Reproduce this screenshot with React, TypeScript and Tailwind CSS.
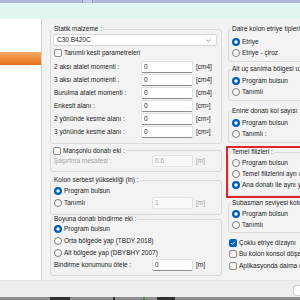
import React from "react";

const Radio = ({ checked }: { checked?: boolean }) => (
  <svg width="8" height="8" viewBox="0 0 8 8" className="shrink-0">
    {checked ? (
      <>
        <circle cx="4" cy="4" r="4" fill="#005fb8" />
        <circle cx="4" cy="4" r="1.7" fill="#ffffff" />
      </>
    ) : (
      <circle cx="4" cy="4" r="3.5" fill="#f9f9f9" stroke="#6f6f6f" strokeWidth="0.9" />
    )}
  </svg>
);

const Check = ({ checked }: { checked?: boolean }) =>
  checked ? (
    <span className="w-[8px] h-[8px] rounded-[2px] bg-[#005fb8] flex items-center justify-center shrink-0">
      <svg width="6" height="6" viewBox="0 0 6 6">
        <path d="M1 3.1 L2.4 4.4 L5 1.6" stroke="#ffffff" strokeWidth="0.9" fill="none" />
      </svg>
    </span>
  ) : (
    <span className="w-[8px] h-[8px] rounded-[2px] border border-[#8a8a8a] bg-[#f6f6f6] shrink-0" />
  );

const Input = ({ value, disabled, wide }: { value: string; disabled?: boolean; wide?: boolean }) => (
  <div
    className={
      (wide ? "w-[52px] " : "w-[41px] ") +
      (disabled
        ? "h-[12px] border border-[#e3e3e3] bg-[#f9f9f9] text-[#a3a3a3] rounded-[2px] flex items-center pl-[2px] shrink-0"
        : "h-[12px] border border-[#e0e0e0] border-b-[#8d8d8d] bg-white rounded-[2px] flex items-center pl-[2px] shrink-0")
    }
  >
    {value}
  </div>
);

const Group = ({
  legend,
  className,
  children,
}: {
  legend: React.ReactNode;
  className: string;
  children?: React.ReactNode;
}) => (
  <fieldset className={"border border-[#dadada] rounded-[3px] px-[3px] min-w-0 " + className}>
    <legend className="px-[1px] -ml-[1px] leading-[8px] h-[8px] whitespace-nowrap">{legend}</legend>
    {children}
  </fieldset>
);

const RadioRow = ({ label, checked, h }: { label: string; checked?: boolean; h: string }) => (
  <div className={"flex items-center gap-[2px] whitespace-nowrap " + h}>
    <Radio checked={checked} />
    <span>{label}</span>
  </div>
);

const MomentRow = ({ label, unit }: { label: string; unit: string }) => (
  <div className="h-[13px] flex items-center whitespace-nowrap">
    <span className="w-[87px] shrink-0">{label}</span>
    <Input value="0" wide />
    <span className="ml-[3px]">{unit}</span>
  </div>
);

export default function App() {
  return (
    <div className="w-[300px] h-[300px] overflow-hidden flex flex-col bg-[#f3f3f3] text-[#1b1b1b] font-['Liberation_Sans',Arial,sans-serif] text-[6.5px] leading-[8px]">
      {/* top strip */}
      <div className="h-[3px] bg-[#b1bade] flex shrink-0">
        <div className="ml-[82px] w-[11px] bg-[#c3c9e6] border-x border-[#8d96c4]" />
      </div>
      {/* mint band */}
      <div className="h-[16px] bg-[#e2f6f1] shrink-0" />

      {/* main area */}
      <div className="flex h-[261px] shrink-0">
        <div className="w-[42px] bg-white border-r border-[#d2d2d2] shrink-0 pt-[33px]">
          <div className="h-[13px] w-[41px] bg-gradient-to-b from-[#f6ab6a] via-[#f08b35] to-[#e6701c]" />
        </div>

        <div className="flex flex-1 pl-[8px] pt-[6px] bg-[#f3f3f3] overflow-hidden">
          {/* middle column */}
          <div className="w-[172px] flex flex-col shrink-0">
            <Group legend="Statik malzeme :" className="h-[119px]">
              <div className="mt-[1px] -ml-[1px] w-[164px] h-[12px] bg-white border border-[#d8d8d8] rounded-[2px] flex items-center justify-between pl-[3px] pr-[5px]">
                <span>C30 B420C</span>
                <svg width="5" height="3" viewBox="0 0 5 3">
                  <path d="M0.5 0.5 L2.5 2.5 L4.5 0.5" stroke="#666" strokeWidth="0.7" fill="none" />
                </svg>
              </div>
              <div className="h-[14px] flex items-center gap-[2px] whitespace-nowrap">
                <Check />
                <span>Tanımlı kesit parametreleri</span>
              </div>
              <MomentRow label="2 aksı atalet momenti :" unit="[cm4]" />
              <MomentRow label="3 aksı atalet momenti :" unit="[cm4]" />
              <MomentRow label="Burulma atalet momenti :" unit="[cm4]" />
              <MomentRow label="Enkesit alanı :" unit="[cm²]" />
              <MomentRow label="2 yönünde kesme alanı :" unit="[cm²]" />
              <MomentRow label="3 yönünde kesme alanı :" unit="[cm²]" />
            </Group>

            <fieldset className="mt-[2px] h-[26px] border border-[#dadada] rounded-[3px] px-[3px] min-w-0">
              <legend className="px-[1px] -ml-[2px] h-[9px] flex items-center gap-[2px] whitespace-nowrap">
                <Check />
                <span>Manşonlu donatı eki :</span>
              </legend>
              <div className="h-[12px] flex items-center whitespace-nowrap">
                <span className="w-[98px] shrink-0 text-[#a3a3a3]">Şaşırtma mesafesi :</span>
                <Input value="0.6" disabled />
                <span className="ml-[3px] text-[#a3a3a3]">[m]</span>
              </div>
            </fieldset>

            <Group legend="Kolon serbest yüksekliği (ln) :" className="mt-[4px] h-[39px]">
              <div className="mt-[1px]">
                <RadioRow label="Program bulsun" checked h="h-[12px]" />
                <div className="h-[12px] flex items-center whitespace-nowrap">
                  <div className="w-[98px] flex items-center gap-[2px] shrink-0">
                    <Radio />
                    <span>Tanımlı</span>
                  </div>
                  <Input value="1" disabled />
                  <span className="ml-[3px] text-[#a3a3a3]">[m]</span>
                </div>
              </div>
            </Group>

            <Group legend="Boyuna donatı bindirme eki :" className="h-[61px]">
              <RadioRow label="Program bulsun" checked h="h-[12px]" />
              <RadioRow label="Orta bölgede yap (TBDY 2018)" h="h-[12px]" />
              <RadioRow label="Alt bölgede yap (DBYBHY 2007)" h="h-[12px]" />
              <div className="h-[12px] flex items-center whitespace-nowrap">
                <span className="w-[98px] shrink-0">Bindirme konumunu ötele :</span>
                <Input value="0" />
                <span className="ml-[3px]">[m]</span>
              </div>
            </Group>
          </div>

          {/* right column */}
          <div className="w-[110px] ml-[6px] flex flex-col shrink-0">
            <Group legend="Daire kolon etriye tipleri" className="h-[37px]">
              <div className="mt-[3px]">
                <RadioRow label="Etriye" checked h="h-[11px]" />
                <RadioRow label="Etriye - çiroz" h="h-[11px]" />
              </div>
            </Group>

            <Group legend="Alt uç sarılma bölgesi uzunluğu :" className="mt-[3px] h-[36px]">
              <div className="mt-[2px]">
                <RadioRow label="Program bulsun" checked h="h-[11px]" />
                <RadioRow label="Tanımlı" h="h-[11px]" />
              </div>
            </Group>

            <Group legend="Enine donatı kol sayısı :" className="mt-[6px] h-[36px]">
              <div className="mt-[2px]">
                <RadioRow label="Program bulsun" checked h="h-[11px]" />
                <RadioRow label="Tanımlı :" h="h-[11px]" />
              </div>
            </Group>

            <div className="mt-[3px] -ml-[2px] h-[52px] border-2 border-[#e3242b]">
              <Group legend="Temel filizleri :" className="h-[48px]">
                <div className="mt-[1px]">
                  <RadioRow label="Program bulsun" h="h-[11px]" />
                  <RadioRow label="Temel filizlerini ayrı çiz" h="h-[11px]" />
                  <RadioRow label="Ana donatı ile aynı yap" checked h="h-[11px]" />
                </div>
              </Group>
            </div>

            <Group legend="Subasman seviyesi kotu :" className="mt-[1px] h-[34px]">
              <div className="mt-[1px]">
                <RadioRow label="Program bulsun" checked h="h-[11px]" />
                <RadioRow label="Tanımlı" h="h-[11px]" />
              </div>
            </Group>

            <div className="mt-[4px] ml-[1px]">
              <div className="h-[11.5px] flex items-center gap-[2px] whitespace-nowrap">
                <Check checked />
                <span>Çoklu etriye dizaynı</span>
              </div>
              <div className="h-[11.5px] flex items-center gap-[2px] whitespace-nowrap">
                <Check />
                <span>Bu kolon konsol döşemeyi taşıyor</span>
              </div>
              <div className="h-[11.5px] flex items-center gap-[2px] whitespace-nowrap">
                <Check />
                <span>Aplikasyonda daima dikkate al</span>
              </div>
            </div>
          </div>
        </div>
      </div>

      {/* bottom bar */}
      <div className="h-[17px] bg-[#eeeeee] border-t border-[#e4e4e4] flex items-start pt-[4px] pl-[293px] shrink-0">
        <div className="w-[30px] h-[11px] bg-white border border-[#cfcfcf] rounded-[3px] shrink-0" />
      </div>
      {/* taskbar strip */}
      <div className="h-[3px] bg-[#8e8e8e] flex shrink-0">
        <div className="ml-[50px] w-[20px] bg-[#333333]" />
        <div className="ml-[43px] w-[2px] bg-[#333333]" />
        <div className="ml-[28px] w-[2px] bg-[#3a8a3a]" />
        <div className="ml-[12px] w-[18px] bg-[#333333]" />
      </div>
    </div>
  );
}
